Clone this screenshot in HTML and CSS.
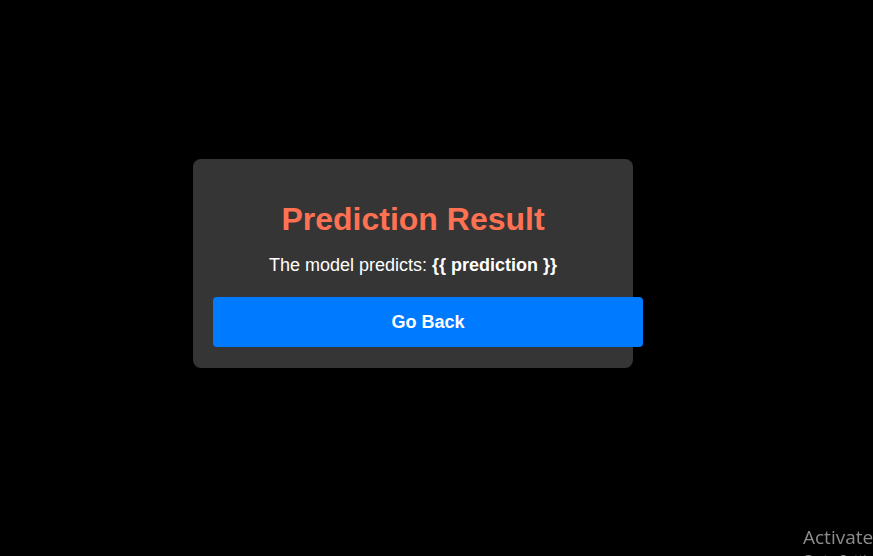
FILE: index.html
```html
<!DOCTYPE html>
<html lang="en">
<head>
<meta charset="utf-8">
<title>Prediction Result</title>
<link rel="stylesheet" href="styles.css">
</head>
<body>
<main class="page">
  <section class="card">
    <h1 class="title">Prediction Result</h1>
    <p class="result">The model predicts: <strong>{{ prediction }}</strong></p>
    <a class="btn" href="#">Go Back</a>
  </section>
</main>
<div class="watermark">
  <div class="wm-title">Activate Windows</div>
  <div class="wm-sub">Go to Settings to activate Windows.</div>
</div>
</body>
</html>
```
FILE: styles.css
```css
html, body {
  margin: 0;
  padding: 0;
  background: #000;
  height: 100%;
  overflow: hidden;
}
body {
  font-family: "Liberation Sans", Arial, sans-serif;
  color: #fff;
}
.page {
  width: 826px;
  display: flex;
  justify-content: center;
  padding-top: 159px;
}
.card {
  width: 400px;
  padding: 20px 20px 21px;
  background: #353535;
  border-radius: 8px;
  text-align: center;
}
.title {
  font-size: 32px;
  font-weight: bold;
  color: #ff7153;
  margin: 21px 0 16px;
  line-height: 38px;
}
.result {
  font-size: 18px;
  margin: 0 0 21px;
  line-height: 22px;
}
.btn {
  display: block;
  width: 100%;
  padding: 15px;
  background: #007bff;
  color: #fff;
  font-weight: bold;
  font-size: 18px;
  line-height: 20px;
  text-decoration: none;
  border-radius: 4px;
  box-sizing: content-box;
}
.watermark {
  position: fixed;
  left: 803px;
  top: 524px;
  color: #8c8c8c;
  font-family: "Open Sans", "DejaVu Sans", sans-serif;
  white-space: nowrap;
}
.wm-title {
  font-size: 19px;
  line-height: 26px;
}
.wm-sub {
  font-size: 13px;
  line-height: 18px;
}
```
